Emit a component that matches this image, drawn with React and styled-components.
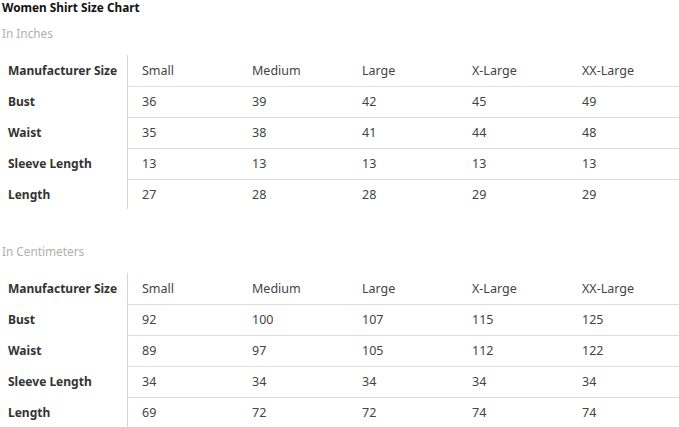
import React from "react";
import styled, { createGlobalStyle } from "styled-components";

const GlobalStyle = createGlobalStyle`
  html, body {
    margin: 0;
    padding: 0;
    background: #fff;
  }
  body {
    font-family: "Noto Sans", "Open Sans", Arial, sans-serif;
    color: #333;
  }
`;

const Page = styled.div`
  width: 679px;
  padding-left: 2px;
`;

const Title = styled.div`
  font-size: 11.8px;
  font-weight: 700;
  line-height: 15px;
  color: #111;
`;

const Subtitle = styled.div`
  font-size: 11.8px;
  line-height: 16px;
  color: #b0b0b0;
  margin-top: ${(p) => p.$top}px;
  margin-bottom: ${(p) => p.$bottom}px;
`;

const Table = styled.table`
  width: 677px;
  border-collapse: collapse;
  table-layout: fixed;
  font-size: 12.5px;
`;

const Row = styled.tr`
  height: 31px;
  &:last-child {
    height: 30px;
  }
  &:not(:last-child) td {
    border-bottom: 1px solid #dcdcdc;
  }
`;

const Label = styled.th`
  width: 119px;
  padding: 0 0 0 6px;
  text-align: left;
  font-size: 12px;
  font-weight: 700;
  color: #333;
  border-right: 1px solid #d4d4d4;
  white-space: nowrap;
`;

const Cell = styled.td`
  padding: 0 0 0 14px;
  color: #444;
  width: ${(p) => (p.$last ? "auto" : "96px")};
`;

const inches = [
  ["Manufacturer Size", "Small", "Medium", "Large", "X-Large", "XX-Large"],
  ["Bust", "36", "39", "42", "45", "49"],
  ["Waist", "35", "38", "41", "44", "48"],
  ["Sleeve Length", "13", "13", "13", "13", "13"],
  ["Length", "27", "28", "28", "29", "29"],
];

const centimeters = [
  ["Manufacturer Size", "Small", "Medium", "Large", "X-Large", "XX-Large"],
  ["Bust", "92", "100", "107", "115", "125"],
  ["Waist", "89", "97", "105", "112", "122"],
  ["Sleeve Length", "34", "34", "34", "34", "34"],
  ["Length", "69", "72", "72", "74", "74"],
];

const SizeTable = ({ rows }) => (
  <Table>
    <tbody>
      {rows.map(([label, ...values]) => (
        <Row key={label}>
          <Label>{label}</Label>
          {values.map((v, i) => (
            <Cell key={i} $last={i === values.length - 1}>
              {v}
            </Cell>
          ))}
        </Row>
      ))}
    </tbody>
  </Table>
);

export default function App() {
  return (
    <Page>
      <GlobalStyle />
      <Title>Women Shirt Size Chart</Title>
      <Subtitle $top={10} $bottom={14}>In Inches</Subtitle>
      <SizeTable rows={inches} />
      <Subtitle $top={34} $bottom={14}>In Centimeters</Subtitle>
      <SizeTable rows={centimeters} />
    </Page>
  );
}
